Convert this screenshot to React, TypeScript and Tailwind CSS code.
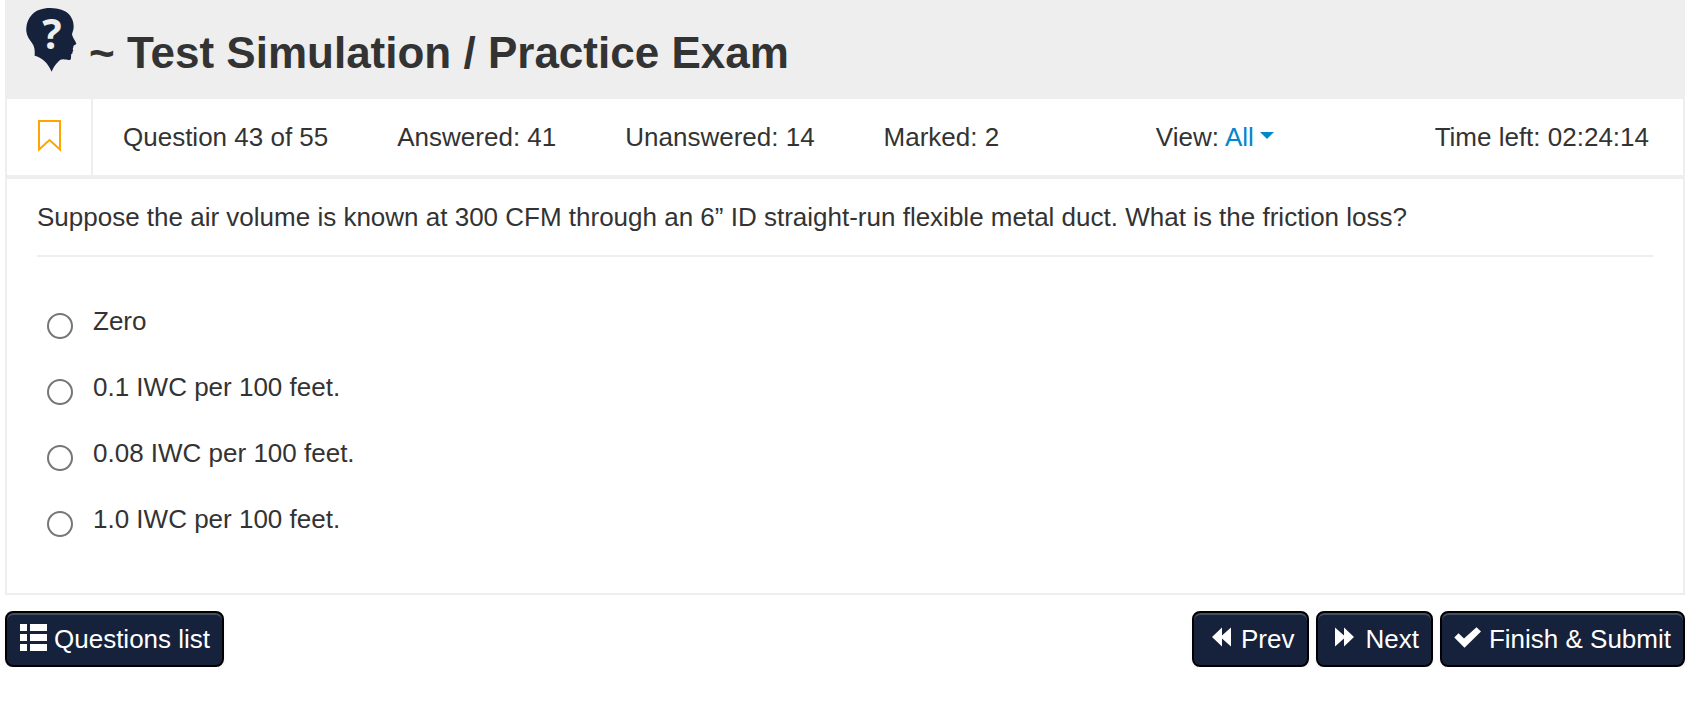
import React from 'react';

const OPTIONS = ['Zero', '0.1 IWC per 100 feet.', '0.08 IWC per 100 feet.', '1.0 IWC per 100 feet.'];

const HeadIcon: React.FC = () => (
  <svg viewBox="50 9 153 207" className="w-[51px] h-[69px] shrink-0 overflow-visible" aria-hidden="true">
    <path
      fill="#16223b"
      d="M122 24C100 24 80 30 67 45C55 58 50 75 51 94C52 108 60 118 68 129C76 140 77 152 76 167C86 169 97 175 105 183C115 192 121 203 127 215C132 203 138 194 146 186C151 180 155 178 162 178C170 179 179 181 183 179C187 176 184 168 186 162C191 160 190 158 189 155C193 154 192 150 190 147C193 144 191 139 194 136C198 134 203 132 200 128C196 120 189 111 188 103C189 96 193 90 193 80C193 60 184 44 167 34C153 26 138 24 122 24Z"
    />
    <text x="128" y="147" textAnchor="middle" fill="#eee" className="font-['Open_Sans',sans-serif] font-bold text-[122px]">
      ?
    </text>
  </svg>
);

const BookmarkIcon: React.FC = () => (
  <svg viewBox="0 0 23 32" className="w-[23px] h-8" fill="none" stroke="#ffa500" strokeWidth="2" aria-hidden="true">
    <path d="M1 1H22V29.5L11.5 20L1 29.5Z" />
  </svg>
);

const ListIcon: React.FC = () => (
  <svg viewBox="0 0 27 27" className="w-[27px] h-[27px]" fill="currentColor" aria-hidden="true">
    <path d="M0 0h7v7H0zM10 0h17v7H10zM0 10h7v7H0zM10 10h17v7H10zM0 20h7v7H0zM10 20h17v7H10z" />
  </svg>
);

const BackwardIcon: React.FC = () => (
  <svg viewBox="0 0 19 20" className="w-[19px] h-5" fill="currentColor" aria-hidden="true">
    <path d="M0 10L10 0.5V8.5L19 0.5V19.5L10 11.5V19.5Z" />
  </svg>
);

const ForwardIcon: React.FC = () => (
  <svg viewBox="0 0 19 20" className="w-[19px] h-5" fill="currentColor" aria-hidden="true">
    <path d="M19 10L9 0.5V8.5L0 0.5V19.5L9 11.5V19.5Z" />
  </svg>
);

const CheckIcon: React.FC = () => (
  <svg viewBox="0 0 27 21" className="w-[27px] h-[21px]" fill="currentColor" aria-hidden="true">
    <path d="M0.3 10.6L4.5 6.3L10 11.4L22.5 0.3L27 4.6L10.5 20.7Z" />
  </svg>
);

interface NavButtonProps {
  icon: React.ReactNode;
  label: string;
  className: string;
}

const NavButton: React.FC<NavButtonProps> = ({ icon, label, className }) => (
  <button
    type="button"
    className={`flex items-center h-14 rounded-lg border-2 border-black bg-[#16223b] text-white whitespace-nowrap shadow-[inset_0_2px_0_rgba(255,255,255,0.2),0_2px_4px_rgba(0,0,0,0.05)] ${className}`}
  >
    <span className="pb-1">{icon}</span>
    {label}
  </button>
);

export default function App() {
  return (
    <div className="pl-[5px] pr-1.5 font-['Liberation_Sans',Arial,sans-serif] text-[26px] leading-9 text-[#333]">
      <header className="flex items-start gap-3 bg-[#eee] px-[21px] pt-[3px] pb-[21px]">
        <HeadIcon />
        <h1 className="pt-[25px] text-[44px] leading-[50px] font-bold">~ Test Simulation / Practice Exam</h1>
      </header>

      <main className="border-x-2 border-b-2 border-[#eee]">
        <div className="flex items-stretch border-b-4 border-[#eee]">
          <button type="button" aria-label="Mark question" className="flex items-center justify-center w-[86px] pb-0.5 border-r-2 border-[#eee]">
            <BookmarkIcon />
          </button>
          <div className="flex flex-1 items-center gap-x-[69px] py-5 pl-[30px] pr-[34px]">
            <span>Question 43 of 55</span>
            <span>Answered: 41</span>
            <span>Unanswered: 14</span>
            <span>Marked: 2</span>
            <div className="flex flex-1 items-center justify-center pr-1">
              <label htmlFor="view">View:</label>
              <select id="view" className="ml-1.5 appearance-none bg-transparent text-[#0088cc]">
                <option>All</option>
              </select>
              <svg viewBox="0 0 14 7" className="ml-1.5 mb-1 w-3.5 h-[7px]" fill="#0088cc" aria-hidden="true">
                <path d="M0 0H14L7 7Z" />
              </svg>
            </div>
            <span>Time left: 02:24:14</span>
          </div>
        </div>

        <section className="px-[30px] pb-[41px]">
          <h2 className="py-5 border-b-2 border-[#eee]">
            Suppose the air volume is known at 300 CFM through an 6” ID straight-run flexible metal duct. What is the friction loss?
          </h2>
          <div className="pt-[31px]">
            {OPTIONS.map(option => (
              <label key={option} className="flex items-start gap-5 pl-2.5 py-[15px]">
                <input type="radio" name="answer" className="mt-[10px] size-[26px] shrink-0 appearance-none rounded-full border-2 border-[#767676] bg-white checked:border-8" />
                <span>{option}</span>
              </label>
            ))}
          </div>
        </section>
      </main>

      <footer className="flex items-center justify-between pt-4">
        <NavButton icon={<ListIcon />} label="Questions list" className="gap-[7px] pl-[13px] pr-3" />
        <div className="flex gap-[7px]">
          <NavButton icon={<BackwardIcon />} label="Prev" className="gap-2.5 pl-[18px] pr-[13px]" />
          <NavButton icon={<ForwardIcon />} label="Next" className="gap-[11px] pl-[17px] pr-3" />
          <NavButton icon={<CheckIcon />} label="Finish & Submit" className="gap-2 px-3" />
        </div>
      </footer>
    </div>
  );
}
